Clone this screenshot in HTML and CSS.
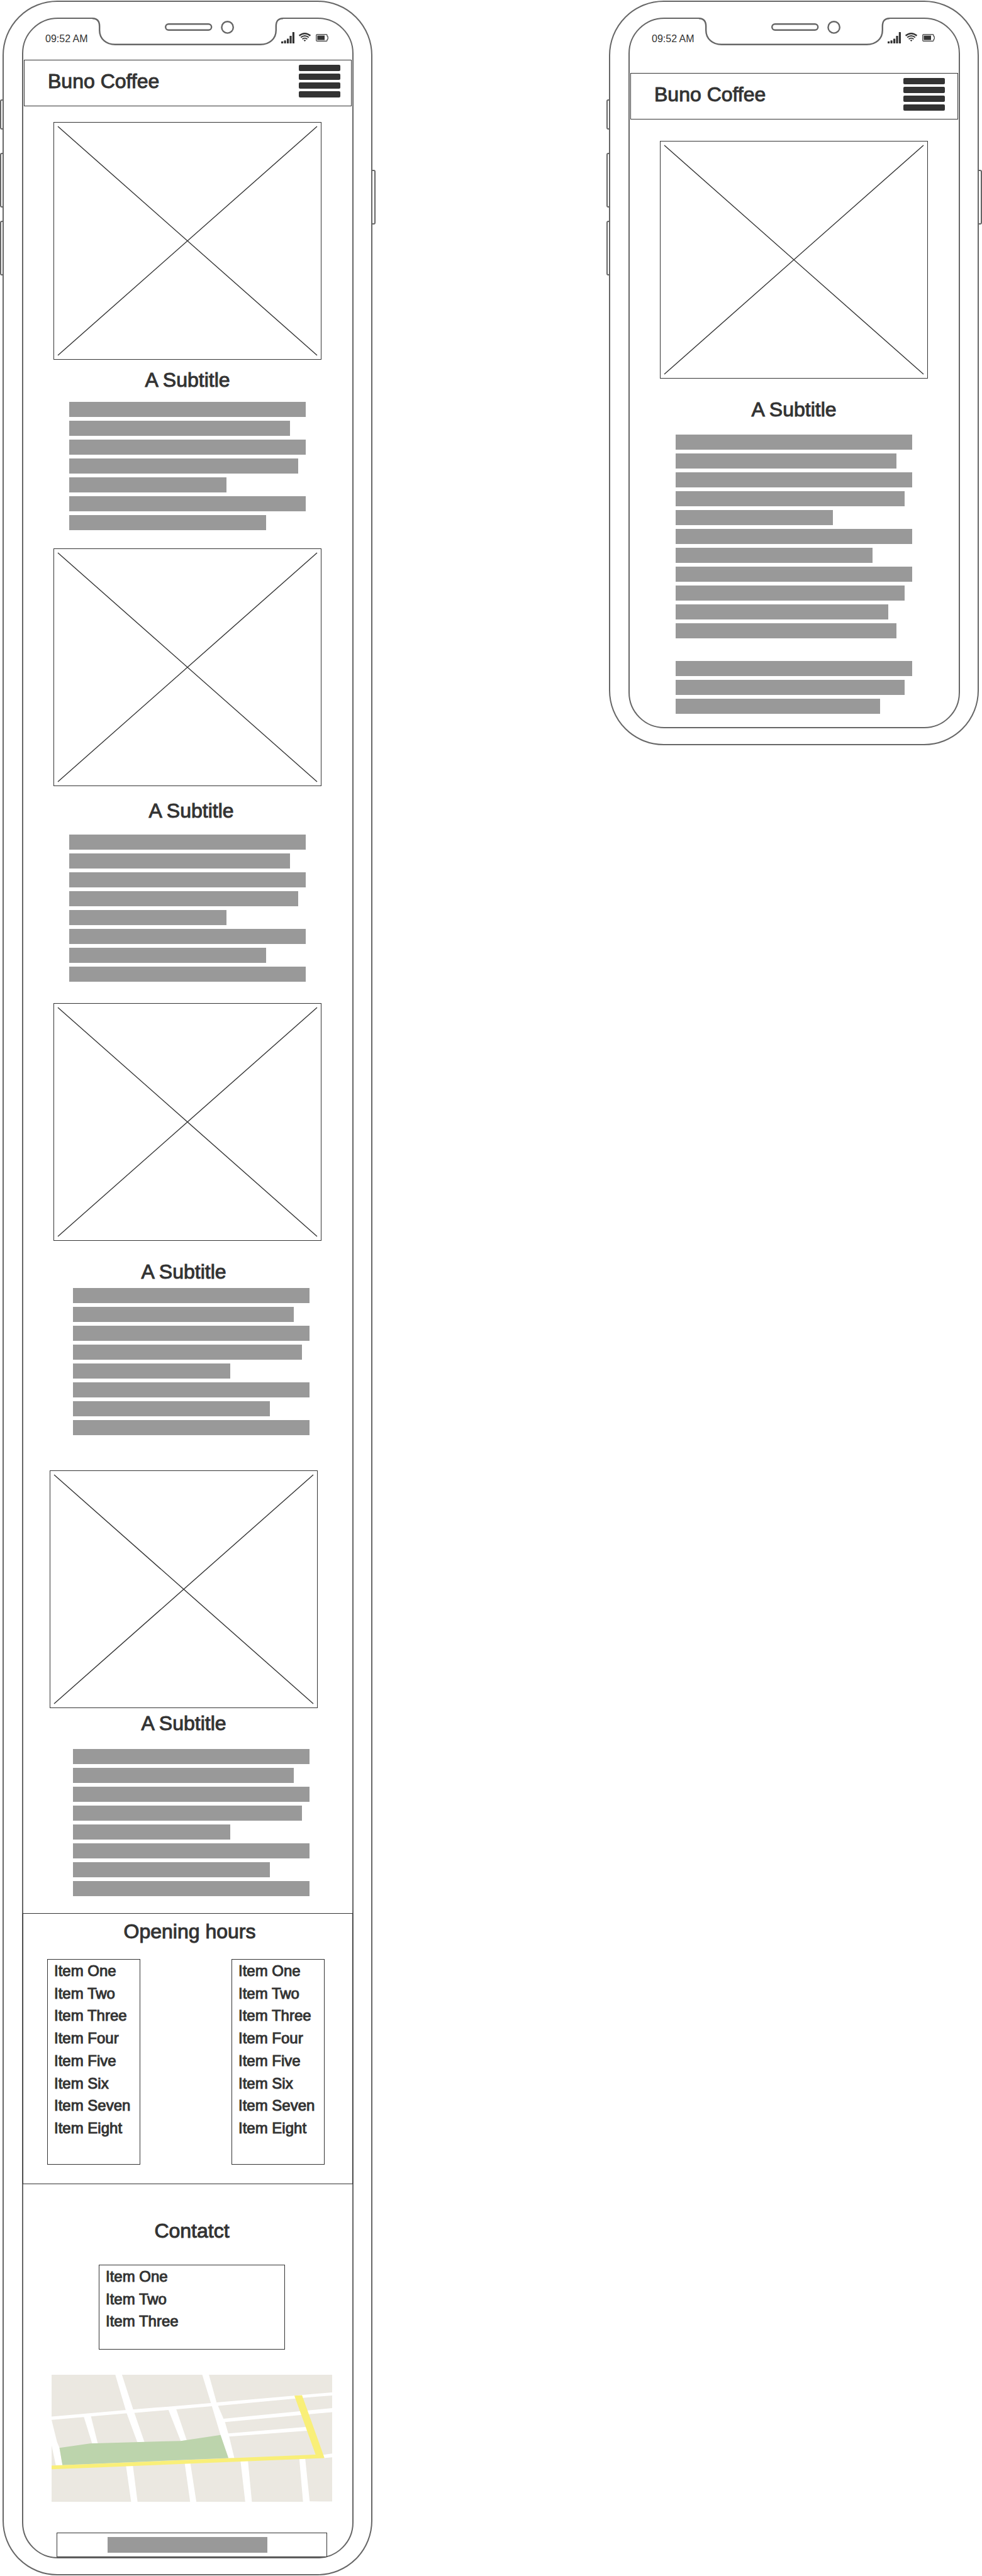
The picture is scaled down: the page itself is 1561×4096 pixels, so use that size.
FILE: index.html
```html
<!DOCTYPE html>
<html lang="en">
<head>
<meta charset="utf-8">
<meta name="viewport" content="width=device-width, initial-scale=1">
<title>Buno Coffee mobile wireframe</title>
<link rel="stylesheet" href="styles.css">
</head>
<body>
<svg class="defs" aria-hidden="true">
  <symbol id="notch" viewBox="0 0 303 46">
    <path d="M0 0 V1.2 C8 1.2 11.2 6 11.2 14 V20 C11.2 34 22 42.8 36 42.8 H267 C281 42.8 291.8 34 291.8 20 V14 C291.8 6 295 1.2 303 1.2 V0 Z" fill="#fff"/>
    <path d="M0 1.2 C8 1.2 11.2 6 11.2 14 V20 C11.2 34 22 42.8 36 42.8 H267 C281 42.8 291.8 34 291.8 20 V14 C291.8 6 295 1.2 303 1.2" fill="none" stroke="#666" stroke-width="2.4"/>
    <rect x="116.2" y="10.2" width="73" height="9.6" rx="4.8" fill="#fff" stroke="#666" stroke-width="2.4"/>
    <circle cx="214.6" cy="15.4" r="9.2" fill="#fff" stroke="#666" stroke-width="2.4"/>
  </symbol>
  <symbol id="status" viewBox="0 0 75 18">
    <g fill="#333">
      <rect x="0" y="14.8" width="3.2" height="3.2" rx=".5"/>
      <rect x="4.5" y="13.2" width="3.2" height="4.8" rx=".5"/>
      <rect x="9" y="10.4" width="3.2" height="7.6" rx=".5"/>
      <rect x="13.4" y="6" width="3.2" height="12" rx=".5"/>
      <rect x="17.8" y="0" width="3.2" height="18" rx=".5"/>
      <path d="M37.5 15 L35.6 13 Q37.5 11.4 39.4 13 Z"/>
      <rect x="57.4" y="5.6" width="11.6" height="7"/>
    </g>
    <g fill="none" stroke="#333">
      <path d="M28.6 5.8 Q37.5 -1.4 46.4 5.8" stroke-width="2.4"/>
      <path d="M31.2 8.6 Q37.5 3.4 43.8 8.6" stroke-width="2"/>
      <path d="M33.6 11.2 Q37.5 8 41.4 11.2" stroke-width="1.8"/>
      <path d="M57 3.9 H72 Q73 3.9 73 5 V6.4 L74.2 7.4 V11 L73 12 V13.2 Q73 14.3 72 14.3 H57 Q55.8 14.3 55.8 13.2 V5 Q55.8 3.9 57 3.9 Z" stroke-width="1.2"/>
    </g>
  </symbol>
  <symbol id="menu" viewBox="0 0 66 52">
    <g fill="#333">
      <rect x="0" y="0" width="66" height="10" rx="2"/>
      <rect x="0" y="14" width="66" height="10" rx="2"/>
      <rect x="0" y="28" width="66" height="10" rx="2"/>
      <rect x="0" y="42" width="66" height="10" rx="2"/>
    </g>
  </symbol>
  <symbol id="cross" viewBox="0 0 424 376" preserveAspectRatio="none">
    <path d="M6 6 L418 370 M418 6 L6 370" fill="none" stroke="#333" stroke-width="1.4"/>
  </symbol>
</svg>

<div class="board">
  <div class="phone">
    <span class="key key-silent"></span><span class="key key-up"></span><span class="key key-down"></span><span class="key key-power"></span>
    <div class="shell">
      <div class="screen">
        <svg class="notch"><use href="#notch"/></svg>
        <div class="status"><span class="clock">09:52 AM</span><svg class="status-icons"><use href="#status"/></svg></div>
        <header class="topbar">
          <h1 class="brand">Buno Coffee</h1>
          <button class="menu" type="button" aria-label="Menu"><svg class="menu-icon"><use href="#menu"/></svg></button>
        </header>
        <main>
          <section class="feature feature-1">
            <div class="picture"><svg class="cross"><use href="#cross"/></svg></div>
            <h2 class="title">A Subtitle</h2>
            <div class="copy"><i class="line"></i><i class="line w93"></i><i class="line"></i><i class="line w97"></i><i class="line w66"></i><i class="line"></i><i class="line w83"></i></div>
          </section>
          <section class="feature feature-2">
            <div class="picture"><svg class="cross"><use href="#cross"/></svg></div>
            <h2 class="title title-right">A Subtitle</h2>
            <div class="copy"><i class="line"></i><i class="line w93"></i><i class="line"></i><i class="line w97"></i><i class="line w66"></i><i class="line"></i><i class="line w83"></i><i class="line"></i></div>
          </section>
          <section class="feature feature-3">
            <div class="picture"><svg class="cross"><use href="#cross"/></svg></div>
            <h2 class="title title-left">A Subtitle</h2>
            <div class="copy copy-right"><i class="line"></i><i class="line w93"></i><i class="line"></i><i class="line w97"></i><i class="line w66"></i><i class="line"></i><i class="line w83"></i><i class="line"></i></div>
          </section>
          <section class="feature feature-4">
            <div class="picture picture-left"><svg class="cross"><use href="#cross"/></svg></div>
            <h2 class="title title-left">A Subtitle</h2>
            <div class="copy copy-right"><i class="line"></i><i class="line w93"></i><i class="line"></i><i class="line w97"></i><i class="line w66"></i><i class="line"></i><i class="line w83"></i><i class="line"></i></div>
          </section>
          <section class="hours">
            <h2 class="title title-right">Opening hours</h2>
            <div class="hours-lists">
              <ul class="list list-hours"><li>Item One</li><li>Item Two</li><li>Item Three</li><li>Item Four</li><li>Item Five</li><li>Item Six</li><li>Item Seven</li><li>Item Eight</li></ul>
              <ul class="list list-hours"><li>Item One</li><li>Item Two</li><li>Item Three</li><li>Item Four</li><li>Item Five</li><li>Item Six</li><li>Item Seven</li><li>Item Eight</li></ul>
            </div>
          </section>
          <section class="contact">
            <h2 class="title">Contatct</h2>
            <ul class="list list-contact"><li>Item One</li><li>Item Two</li><li>Item Three</li></ul>
            <svg class="map" viewBox="209 723 1136 534" preserveAspectRatio="none" role="img" aria-label="Map">
              <rect x="209" y="723" width="1136" height="534" fill="#ebe8e1"/>
              <g fill="#fff">
                <path d="M209 899 L340 887 L512 871 L682 857 L853 842 L877 839 L1192 811 L1345 797 V810 L1226 820 L887 853 L858 855 L548 883 L514 885 L209 913 Z"/>
                <path d="M467 723 H494 L539 868 L585 1006 H556 L513 885 Z"/>
                <path d="M819 723 H846 L877 839 L911 922 L928 983 L949 1073 H925 L893 976 L858 855 Z"/>
                <path d="M339 898 L368 896 L396 1012 H373 Z"/>
                <path d="M681 868 L713 866 L756 998 L732 1002 Z"/>
                <path d="M209 913 L231 1005 L241 1030 L253 1103 H226 L209 1020 Z"/>
                <path d="M897 909 L1345 863 V880 L911 922 Z"/>
                <path d="M918 970 L1245 942 V958 L928 983 Z"/>
                <path d="M510 1104 H538 L557 1257 H531 Z"/>
                <path d="M748 1095 H771 L795 1257 H770 Z"/>
                <path d="M974 1085 H1004 L1020 1257 H993 Z"/>
                <path d="M1212 1076 H1236 L1254 1255 L1345 1256 V1257 H1227 Z"/>
                <path d="M1305 1060 L1345 1054 V1070 L1310 1073 Z"/>
              </g>
              <path d="M241 1030 L365 1012 L732 1001 L893 976 L925 1073 L253 1103 Z" fill="#bcd4ac"/>
              <path d="M209 1105 L1278 1059 L1192 811 L1223 809 L1314 1073 L390 1113 L209 1120 Z" fill="#f9ef78"/>
            </svg>
            <footer class="footer"><span class="footer-line"></span></footer>
          </section>
        </main>
      </div>
    </div>
  </div>

  <div class="phone">
    <span class="key key-silent"></span><span class="key key-up"></span><span class="key key-down"></span><span class="key key-power"></span>
    <div class="shell">
      <div class="screen screen-short">
        <svg class="notch"><use href="#notch"/></svg>
        <div class="status status-tall"><span class="clock">09:52 AM</span><svg class="status-icons"><use href="#status"/></svg></div>
        <header class="topbar topbar-inset">
          <h1 class="brand">Buno Coffee</h1>
          <button class="menu" type="button" aria-label="Menu"><svg class="menu-icon"><use href="#menu"/></svg></button>
        </header>
        <main>
          <section class="feature feature-5">
            <div class="picture"><svg class="cross"><use href="#cross"/></svg></div>
            <h2 class="title">A Subtitle</h2>
            <div class="copy"><i class="line"></i><i class="line w93"></i><i class="line"></i><i class="line w97"></i><i class="line w66"></i><i class="line"></i><i class="line w83"></i><i class="line"></i><i class="line w97"></i><i class="line w90"></i><i class="line w93"></i><i class="line blank"></i><i class="line"></i><i class="line w97"></i><i class="line w86"></i></div>
          </section>
        </main>
      </div>
    </div>
  </div>
</div>
</body>
</html>
```
FILE: styles.css
```css
* {
  box-sizing: border-box;
}

body {
  margin: 0;
  background: #fff;
  color: #333;
  font-family: "Liberation Sans", Arial, sans-serif;
}

h1, h2, ul {
  margin: 0;
  padding: 0;
  font-weight: 400;
}

.defs {
  display: none;
}

/* Two devices side by side with a wide gutter */
.board {
  display: grid;
  grid-template-columns: 597fr 597fr;
  column-gap: 367px;
  align-items: start;
}

/* Device frame */
.phone {
  position: relative;
  padding: 1px 5px 1px 4px;
}

.shell {
  position: relative;
  padding: 25px 28px 25px 29px;
  border: 2px solid #666;
  border-radius: 87px;
  background: #fff;
}

.screen {
  position: relative;
  border: 2px solid #666;
  border-radius: 57px;
}

.screen-short {
  padding-bottom: 21px;
}

.notch {
  position: absolute;
  top: -2px;
  left: 50%;
  width: 303px;
  height: 46px;
  margin-left: -152px;
}

.key {
  position: absolute;
  left: 0;
  width: 8px;
  height: 87px;
  border: 2px solid #666;
  border-radius: 3px;
}

.key-silent {
  top: 158px;
  height: 48px;
}

.key-up {
  top: 243px;
}

.key-down {
  top: 351px;
}

.key-power {
  top: 270px;
  right: 0;
  left: auto;
}

/* Status row */
.status {
  display: flex;
  justify-content: space-between;
  height: 65px;
  padding: 21px 38px 0 35px;
}

.status-tall {
  height: 86px;
}

.clock {
  font-size: 16px;
  line-height: 22px;
}

.status-icons {
  width: 75px;
  height: 18px;
}

/* Header */
.topbar {
  display: flex;
  justify-content: space-between;
  align-items: center;
  margin: 0 1px;
  padding: 7px 17px 13px 37px;
  border: 1px solid #333;
}

.topbar-inset {
  padding-right: 20px;
}

.brand {
  font-size: 32px;
  line-height: 40px;
}

/* Marker-like weight for headings and list text */
.brand,
.title,
.list {
  -webkit-text-stroke: 1px #333;
}

.menu {
  padding: 0;
  border: 0;
  background: none;
}

.menu-icon {
  display: block;
  width: 66px;
  height: 52px;
}

/* Picture, subtitle and copy */
.feature {
  display: flex;
  flex-direction: column;
  padding: 0 49px 0 48px;
}

.feature-1 {
  padding-top: 25px;
}

.feature-1 .title {
  margin: 12px 0 15px;
}

.feature-2 {
  padding-top: 29px;
}

.feature-2 .title {
  margin-top: 19px;
  margin-bottom: 18px;
}

.feature-3 {
  padding-top: 34px;
}

.feature-3 .title {
  margin-top: 29px;
  margin-bottom: 6px;
}

.feature-4 {
  padding-top: 56px;
}

.feature-4 .title {
  margin-top: 4px;
  margin-bottom: 21px;
}

.feature-5 {
  padding-top: 34px;
}

.feature-5 .title {
  margin: 29px 0 20px;
}

.picture {
  border: 1px solid #333;
}

.picture-left {
  margin: 0 6px 0 -6px;
}

.cross {
  display: block;
  width: 100%;
  height: 376px;
}

.title {
  font-size: 32px;
  line-height: 40px;
  text-align: center;
}

.title-right {
  padding-left: 12px;
}

.title-left {
  padding-right: 12px;
}

.copy {
  display: flex;
  flex-direction: column;
  gap: 6px;
  padding: 0 25px;
}

.copy-right {
  padding: 0 19px 0 31px;
}

.line {
  height: 24px;
  max-width: 100%;
  background: #999;
}

.w97 { width: 364px; }
.w93 { width: 351px; }
.w90 { width: 338px; }
.w86 { width: 325px; }
.w83 { width: 313px; }
.w66 { width: 250px; }

.blank {
  background: none;
}

/* Opening hours */
.hours {
  position: relative;
  margin: 27px -1px 0;
  padding: 8px 44px 30px 38px;
  border: 1px solid #333;
}

.hours-lists {
  display: flex;
  justify-content: space-between;
  margin-top: 24px;
}

.list {
  display: flex;
  flex-direction: column;
  justify-content: space-between;
  border: 1px solid #333;
  list-style: none;
  font-size: 24px;
  line-height: 28px;
}

.list-hours {
  width: 148px;
  min-height: 327px;
  padding: 4px 9px 43px 10px;
}

/* Contact */
.contact {
  display: flex;
  flex-direction: column;
  align-items: center;
  padding: 54px 0 0 13px;
}

.list-contact {
  width: 296px;
  min-height: 135px;
  margin-top: 34px;
  padding: 4px 9px 30px 10px;
}

.map {
  display: block;
  width: 446px;
  height: 202px;
  margin-top: 40px;
}

.footer {
  position: relative;
  width: 430px;
  margin-top: 49px;
  padding: 6px 80px;
  border: 1px solid #333;
  background: #fff;
}

.footer-line {
  display: block;
  width: 254px;
  height: 25px;
  background: #999;
}
```
